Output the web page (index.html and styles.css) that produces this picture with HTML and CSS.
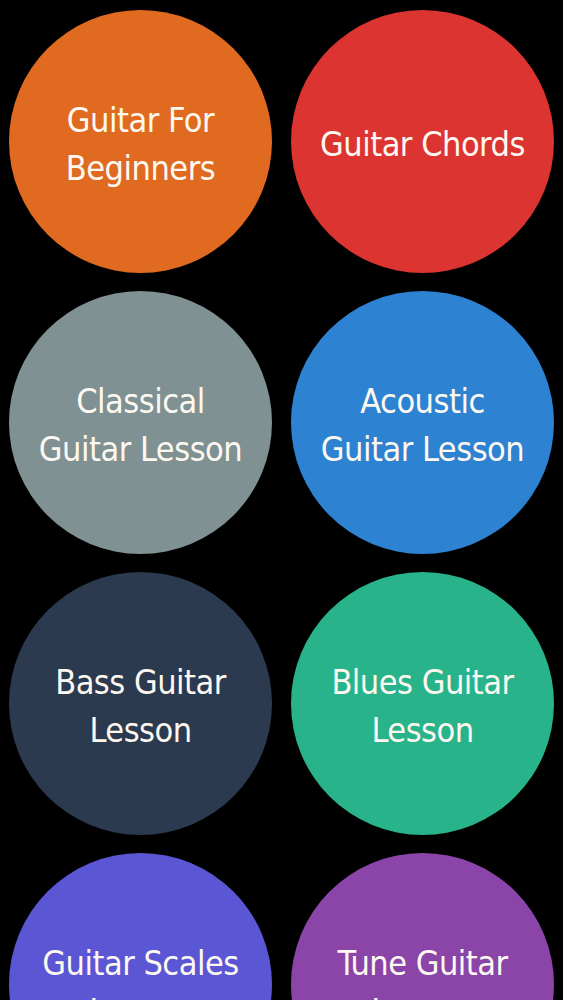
FILE: index.html
```html
<!DOCTYPE html>
<html lang="en">
<head>
<meta charset="utf-8">
<title>Guitar Lessons</title>
<link rel="stylesheet" href="styles.css">
</head>
<body>
<main class="grid">
  <div class="tile orange"><span>Guitar For<br>Beginners</span></div>
  <div class="tile red"><span>Guitar Chords</span></div>
  <div class="tile gray"><span>Classical<br>Guitar Lesson</span></div>
  <div class="tile blue"><span>Acoustic<br>Guitar Lesson</span></div>
  <div class="tile navy"><span>Bass Guitar<br>Lesson</span></div>
  <div class="tile green"><span>Blues Guitar<br>Lesson</span></div>
  <div class="tile indigo"><span>Guitar Scales<br>Lesson</span></div>
  <div class="tile purple"><span>Tune Guitar<br>Lesson</span></div>
</main>
</body>
</html>
```
FILE: styles.css
```css
html, body {
  margin: 0;
  padding: 0;
  background: #000;
}
body {
  height: 1000px;
  overflow: hidden;
}
.grid {
  display: grid;
  grid-template-columns: 263px 263px;
  column-gap: 19px;
  row-gap: 18px;
  padding: 10px 9px 0 9px;
}
.tile {
  box-sizing: border-box;
  width: 263px;
  height: 263px;
  padding-top: 4px;
  border-radius: 50%;
  display: flex;
  align-items: center;
  justify-content: center;
  text-align: center;
  color: #fdf8f0;
  font-family: "DejaVu Sans Condensed", "DejaVu Sans", sans-serif;
  font-stretch: condensed;
  font-size: 34px;
  letter-spacing: -0.5px;
  line-height: 48px;
  font-weight: normal;
}
.orange { background: #df6a20; }
.red { background: #dc3431; }
.gray { background: #7f9192; }
.blue { background: #2e82d2; }
.navy { background: #2b3a4f; }
.green { background: #28b38b; }
.indigo { background: #5a56d4; }
.purple { background: #8b44a8; }
```
